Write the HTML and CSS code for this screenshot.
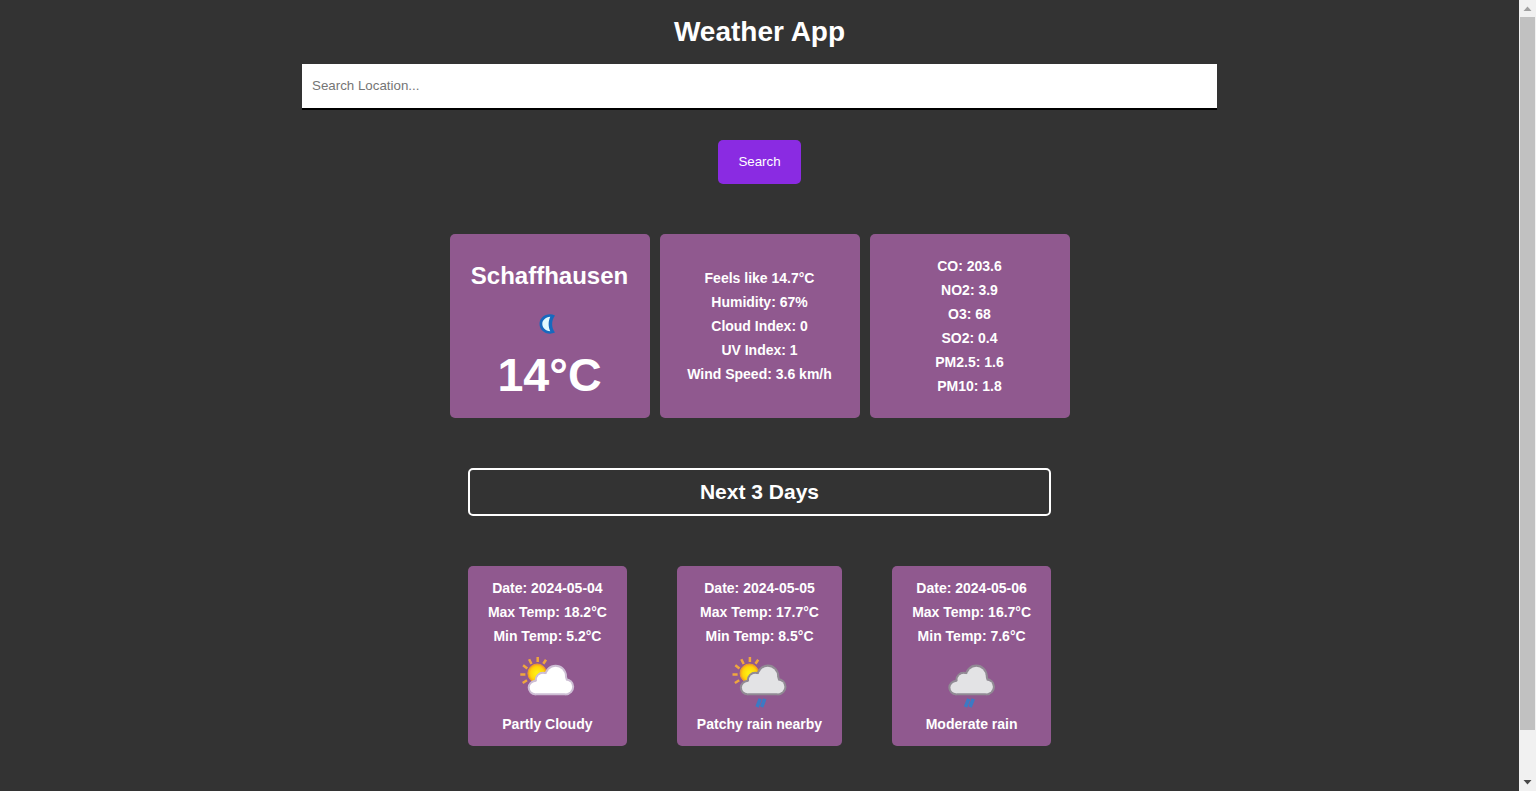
FILE: index.html
```html
<!DOCTYPE html>
<html lang="en">
<head>
<meta charset="UTF-8">
<title>Weather App</title>
<link rel="stylesheet" href="styles.css">
</head>
<body>
<svg class="defs" aria-hidden="true">
  <defs>
    <radialGradient id="sunFill"><stop offset="0.2" stop-color="#ffee10"/><stop offset="0.7" stop-color="#ffd60a"/><stop offset="1" stop-color="#f5a11c"/></radialGradient>
    <g id="puffs">
      <circle cx="40.600" cy="28" r="9.300"/>
      <circle cx="28" cy="32" r="6.200"/>
      <circle cx="20.300" cy="39.600" r="5.600"/>
      <circle cx="50.800" cy="38.800" r="6.400"/>
      <path d="M20.300 45.200L18 35.500l4-2.500 4-6.500 6-.5 7-5 10 4.500 2 7 1.500 12.700z"/>
    </g>
    <g id="sun">
      <circle cx="22.200" cy="25.300" r="9.300" fill="url(#sunFill)" stroke="#ee9d2c" stroke-width="1"/>
      <path d="M22.700 14V9M28.300 15.800l2.700-4M16.500 16l-2.400-4.700M12.300 20.500l-4.200-3.200M10.400 26.500H5.300M12 32.300l-4.300 2.700" stroke="#f0a73e" stroke-width="2.500" fill="none"/>
    </g>
    <path id="rain" d="M33 50.800l-3.200 8.200M37.600 50.800l-3.200 8.200" stroke="#3c7ac4" stroke-width="3.500" fill="none"/>
  </defs>
</svg>
<div class="layout">
  <main class="app">
    <h1 class="title">Weather App</h1>
    <input class="search-input" type="text" placeholder="Search Location...">
    <button class="search-button">Search</button>

    <section class="current">
      <article class="card">
        <h2 class="city">Schaffhausen</h2>
        <svg class="icon" viewBox="0 0 64 64">
          <path d="M37 23.500C29.500 20 21.500 25 21.500 32s8 12 15.500 8.500c-3.800-5-3.800-12 0-17z" fill="#1769be"/>
          <path d="M32.300 24.800c-5 .5-8 3.500-8 7.200s3 6.700 8 7.200c-2.200-4.200-2.200-10.200 0-14.400z" fill="#e2fbff"/>
        </svg>
        <p class="temperature">14°C</p>
      </article>
      <article class="card">
        <p>Feels like 14.7°C</p>
        <p>Humidity: 67%</p>
        <p>Cloud Index: 0</p>
        <p>UV Index: 1</p>
        <p>Wind Speed: 3.6 km/h</p>
      </article>
      <article class="card">
        <p>CO: 203.6</p>
        <p>NO2: 3.9</p>
        <p>O3: 68</p>
        <p>SO2: 0.4</p>
        <p>PM2.5: 1.6</p>
        <p>PM10: 1.8</p>
      </article>
    </section>

    <section class="forecast">
      <h2 class="forecast-title">Next 3 Days</h2>
      <div class="days">
        <article class="day">
          <p>Date: 2024-05-04</p>
          <p>Max Temp: 18.2°C</p>
          <p>Min Temp: 5.2°C</p>
          <svg class="icon" viewBox="0 0 64 64"><use href="#sun"/><use href="#puffs" class="rim-light"/><use href="#puffs" class="cloud-white"/></svg>
          <p>Partly Cloudy</p>
        </article>
        <article class="day">
          <p>Date: 2024-05-05</p>
          <p>Max Temp: 17.7°C</p>
          <p>Min Temp: 8.5°C</p>
          <svg class="icon" viewBox="0 0 64 64"><g transform="translate(-0.800 0)"><use href="#sun"/><use href="#puffs" class="rim-dark"/><use href="#puffs" class="cloud-grey"/><use href="#rain"/></g></svg>
          <p>Patchy rain nearby</p>
        </article>
        <article class="day">
          <p>Date: 2024-05-06</p>
          <p>Max Temp: 16.7°C</p>
          <p>Min Temp: 7.6°C</p>
          <svg class="icon" viewBox="0 0 64 64"><g transform="translate(-4.300 0)"><use href="#puffs" class="rim-dark"/><use href="#puffs" class="cloud-grey"/><use href="#rain"/></g></svg>
          <p>Moderate rain</p>
        </article>
      </div>
    </section>
  </main>
  <aside class="scrollbar" aria-hidden="true">
    <svg class="arrow" viewBox="0 0 17 17"><path d="M4.500 11L8.500 6.500l4 4.500z" fill="#a0a0a0"/></svg>
    <div class="thumb"></div>
    <svg class="arrow arrow-down" viewBox="0 0 17 17"><path d="M4.500 6l4 4.500 4-4.500z" fill="#484848"/></svg>
  </aside>
</div>
</body>
</html>
```
FILE: styles.css
```css
* {
  margin: 0;
  padding: 0;
  box-sizing: border-box;
}

body {
  background: #333;
  color: #fff;
  font-family: "Liberation Sans", Arial, sans-serif;
  overflow: hidden;
}

.defs {
  position: absolute;
  width: 0;
  height: 0;
}

.layout {
  display: flex;
  height: 791px;
}

.app {
  flex: 1;
  display: flex;
  flex-direction: column;
  align-items: center;
  padding-top: 16px;
}

.title {
  font-size: 28px;
  line-height: 32px;
}

.search-input {
  width: 915px;
  height: 46px;
  margin-top: 16px;
  padding: 0 10px 2px;
  border: none;
  border-bottom: 2px solid #000;
  background: #fff;
  font-family: inherit;
  font-size: 13.333px;
}

.search-input::placeholder {
  color: #757575;
}

.search-button {
  height: 44px;
  margin-top: 30px;
  padding: 0 20px 1px;
  border: none;
  border-radius: 5px;
  background: #8a2be2;
  color: #fff;
  font-family: inherit;
  font-size: 13.333px;
}

.current {
  display: flex;
  gap: 10px;
  margin-top: 50px;
}

.card,
.day {
  display: flex;
  flex-direction: column;
  align-items: center;
  border-radius: 5px;
  background: #90598f;
  font-size: 14px;
  font-weight: bold;
  line-height: 24px;
  white-space: nowrap;
}

.card {
  justify-content: center;
  width: 200px;
  height: 184px;
}

.city {
  padding-top: 2px;
  font-size: 24px;
  line-height: 32px;
}

.temperature {
  font-size: 46.6px;
  line-height: 38px;
}

.icon {
  display: block;
  width: 64px;
  height: 64px;
}

.rim-light {
  stroke: #cdbed4;
  stroke-width: 4px;
  stroke-linejoin: round;
}

.rim-dark {
  stroke: #918a94;
  stroke-width: 4.2px;
  stroke-linejoin: round;
}

.cloud-white {
  fill: #fff;
}

.cloud-grey {
  fill: #e3e3e5;
}

.forecast {
  margin-top: 50px;
}

.forecast-title {
  height: 48px;
  border: 2px solid #fff;
  border-radius: 5px;
  font-size: 21px;
  line-height: 44px;
  text-align: center;
}

.days {
  display: flex;
  gap: 50px;
  margin-top: 50px;
}

.day {
  padding: 10px 20px;
}

.scrollbar {
  display: flex;
  flex-direction: column;
  width: 17px;
  background: #f1f1f1;
}

.arrow {
  width: 17px;
  height: 17px;
}

.arrow-down {
  margin-top: auto;
}

.thumb {
  height: 713px;
  margin: 0 1px;
  background: #c1c1c1;
}
```
